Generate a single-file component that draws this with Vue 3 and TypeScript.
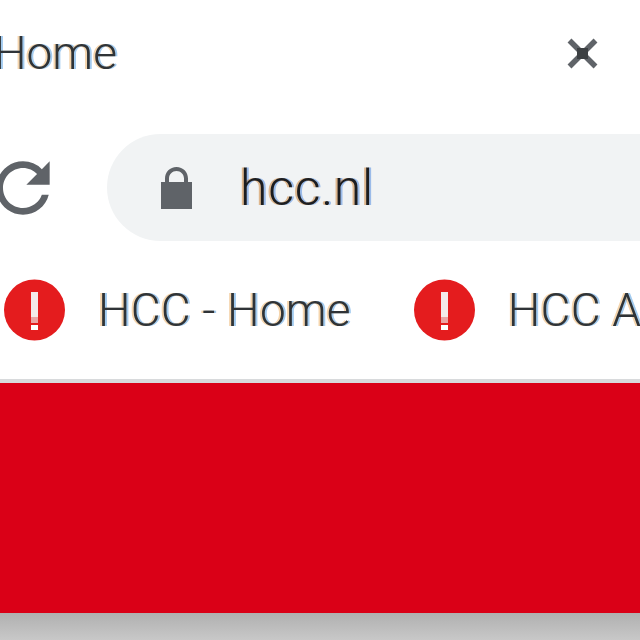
<script setup lang="ts">
const bookmarks: { id: number; label: string }[] = [
  { id: 1, label: 'HCC - Home' },
  { id: 2, label: 'HCC Agenda' },
]
</script>

<template>
  <div class="page">
    <div class="tabstrip">
      <span class="tab-title">Home</span>
      <svg class="close" width="31" height="31" viewBox="0 0 31 31" aria-label="Close">
        <path d="M2.500 2.500 28.500 28.500M28.500 2.500 2.500 28.500" stroke="#5f6368" stroke-width="5.500" fill="none" />
        <rect x="10" y="10" width="11" height="11" fill="#3c4043" />
      </svg>
    </div>
    <div class="toolbar">
      <svg class="reload" width="80" height="80" viewBox="0 0 24 24" aria-label="Reload">
        <path fill="#5f6368" d="M17.65 6.35A7.958 7.958 0 0 0 12 4c-4.42 0-7.99 3.58-7.99 8s3.57 8 7.99 8c3.73 0 6.84-2.55 7.73-6h-2.08A5.99 5.99 0 0 1 12 18c-3.31 0-6-2.69-6-6s2.69-6 6-6c1.66 0 3.14.69 4.22 1.78L13 11h7V4l-2.35 2.35z" />
      </svg>
      <div class="omnibox">
        <svg class="lock" width="31" height="42" viewBox="0 0 31 42" aria-label="Secure">
          <path fill="#5f6368" d="M0 15h4v-3.500C4 5 9 0 15.500 0S27 5 27 11.500V15h4v27H0zM8 15h15v-3.500C23 7.300 19.700 4 15.500 4S8 7.300 8 11.500z" />
        </svg>
        <span class="url">hcc.nl</span>
      </div>
    </div>
    <div class="bookmarks">
      <div v-for="b in bookmarks" :key="b.id" class="bookmark">
        <svg class="fav" width="62" height="62" viewBox="0 0 62 62">
          <circle cx="30.500" cy="31" r="30.500" fill="#e41c1e" />
          <rect x="27" y="13" width="7" height="25" fill="#f4eaea" />
          <rect x="27" y="38" width="7" height="6" fill="#eba5a5" />
          <rect x="27" y="46" width="7" height="5" fill="#fff" />
        </svg>
        <span class="label">{{ b.label }}</span>
      </div>
    </div>
    <div class="divider"></div>
    <div class="banner"></div>
    <div class="shadow"></div>
  </div>
</template>

<style>
html, body { margin: 0; background: #fff; }
</style>

<style scoped>
.page {
  width: 640px;
  height: 640px;
  overflow: hidden;
  display: flex;
  flex-direction: column;
  background: #fff;
  font-family: Roboto, "Liberation Sans", sans-serif;
}
.tabstrip {
  height: 134px;
  flex: none;
  display: flex;
  justify-content: space-between;
  align-items: flex-start;
  padding-right: 42px;
}
.tab-title {
  margin: 25px 0 0 -6px;
  font-size: 46px;
  font-weight: 300;
  line-height: 56px;
  color: #2f3337;
  text-shadow: -2px 0 rgba(230, 150, 50, 0.4), 2px 0 rgba(50, 140, 220, 0.45);
  filter: blur(0.6px);
}
.close {
  margin-top: 38px;
  filter: blur(0.7px);
}
.toolbar {
  height: 107px;
  flex: none;
  display: flex;
  align-items: center;
}
.reload {
  flex: none;
  margin-left: -17px;
  filter: blur(0.6px);
}
.omnibox {
  flex: none;
  width: 600px;
  height: 107px;
  margin-left: 44px;
  padding-left: 54px;
  box-sizing: border-box;
  display: flex;
  align-items: center;
  background: #f1f3f4;
  border-radius: 54px 0 0 54px;
}
.lock {
  flex: none;
  filter: blur(0.5px);
}
.url {
  margin-left: 48px;
  font-size: 50px;
  font-weight: 300;
  letter-spacing: 0.7px;
  line-height: 60px;
  color: #1c1d20;
  text-shadow: -2px 0 rgba(200, 110, 20, 0.45), 2px 0 rgba(50, 120, 220, 0.45);
  filter: blur(0.6px);
}
.bookmarks {
  height: 138px;
  flex: none;
  display: flex;
  align-items: flex-start;
  gap: 63px;
  padding-left: 4px;
  white-space: nowrap;
}
.bookmark {
  display: flex;
  align-items: center;
  gap: 32px;
  margin-top: 38px;
  flex: none;
}
.fav {
  flex: none;
  filter: blur(0.6px);
}
.label {
  font-size: 46px;
  font-weight: 300;
  letter-spacing: 0.2px;
  line-height: 62px;
  color: #2f3337;
  text-shadow: -2px 0 rgba(230, 150, 50, 0.4), 2px 0 rgba(50, 140, 220, 0.45);
  filter: blur(0.6px);
}
.divider {
  height: 4px;
  flex: none;
  background: #d8dadc;
}
.banner {
  height: 230px;
  flex: none;
  background: #da0017;
}
.shadow {
  flex: 1;
  background: linear-gradient(#b0b0b0, #c8c8c8);
}
</style>
